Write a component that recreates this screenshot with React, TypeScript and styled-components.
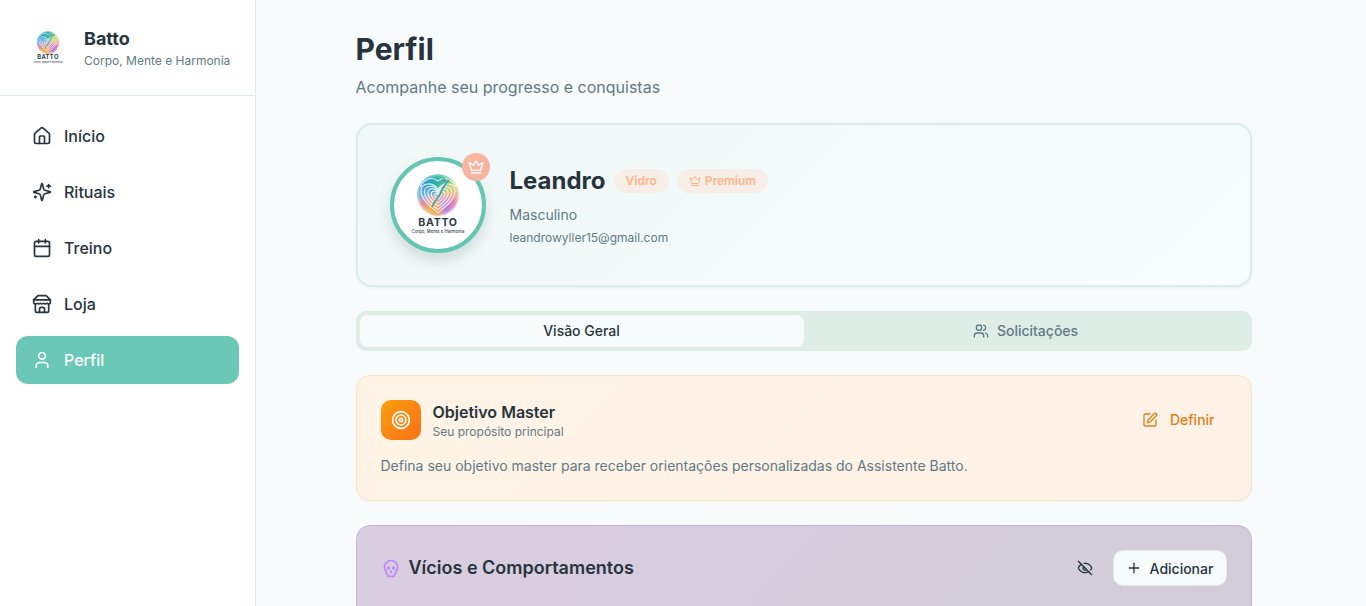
import React from "react";
import styled, { createGlobalStyle } from "styled-components";
import { Home, Calendar, User, Crown, Users, SquarePen, Skull, EyeOff, Plus } from "lucide-react";

const Global = createGlobalStyle`
  html, body { margin: 0; padding: 0; height: 100%; overflow: hidden; background: #f7fbfc; }
  body { font-family: Inter, "Liberation Sans", sans-serif; color: #27343d; }
  #root { height: 100%; }
  * { box-sizing: border-box; }
`;

const Shell = styled.div`
  display: flex;
  height: 606px;
  overflow: hidden;
`;
const Sidebar = styled.aside`
  width: 256px;
  flex: none;
  background: #fff;
  border-right: 1px solid #e1ebea;
`;
const Brand = styled.div`
  height: 96px;
  display: flex;
  align-items: center;
  gap: 12px;
  padding: 0 24px;
  border-bottom: 1px solid #e1ebea;
`;
const BrandName = styled.div`
  font-size: 18px;
  line-height: 28px;
  font-weight: 700;
  margin-top: -1px;
`;
const BrandSub = styled.div`
  font-size: 12px;
  line-height: 16px;
  color: #5f7a85;
`;
const Nav = styled.nav`
  display: flex;
  flex-direction: column;
  gap: 8px;
  padding: 16px;
`;
const NavItem = styled.div<{ $active?: boolean }>`
  height: 48px;
  display: flex;
  align-items: center;
  gap: 12px;
  padding: 0 16px;
  border-radius: 12px;
  font-size: 16px;
  font-weight: 500;
  background: ${(p) => (p.$active ? "#6cc8b6" : "transparent")};
  color: ${(p) => (p.$active ? "#f9fdfc" : "#27343d")};
`;
const Main = styled.main`
  flex: 1;
  padding: 31px 0 0 99.5px;
  min-width: 0;
`;
const Content = styled.div`
  width: 896px;
  display: flex;
  flex-direction: column;
`;
const Title = styled.h1`
  margin: 0;
  font-size: 30px;
  line-height: 36px;
  font-weight: 700;
`;
const Subtitle = styled.p`
  margin: 8px 0 0;
  font-size: 16px;
  line-height: 24px;
  color: #5f7a85;
`;
const ProfileCard = styled.section`
  margin-top: 24px;
  height: 164px;
  padding: 32px;
  display: flex;
  gap: 24px;
  border: 2px solid #d9ece8;
  border-radius: 16px;
  background: linear-gradient(135deg, #f0f9f8, #f7fcfc);
  box-shadow: 0 1px 3px rgba(60, 100, 100, 0.08);
`;
const AvatarWrap = styled.div`
  position: relative;
  width: 96px;
  height: 96px;
  flex: none;
`;
const Avatar = styled.div`
  width: 96px;
  height: 96px;
  border-radius: 50%;
  border: 4px solid #65c5b3;
  background: #fff;
  box-shadow: 0 8px 14px rgba(60, 90, 90, 0.18);
`;
const CrownBadge = styled.div`
  position: absolute;
  top: -4px;
  right: -4px;
  width: 28px;
  height: 28px;
  border-radius: 50%;
  display: flex;
  align-items: center;
  justify-content: center;
  background: linear-gradient(135deg, #f8b5a3, #f4b3a0);
  color: #fff;
`;
const Info = styled.div`
  display: flex;
  flex-direction: column;
  padding-top: 6px;
`;
const NameRow = styled.div`
  display: flex;
  align-items: center;
  gap: 8px;
  height: 36px;
`;
const Name = styled.span`
  font-size: 24px;
  line-height: 32px;
  font-weight: 700;
`;
const Pill = styled.span`
  display: inline-flex;
  align-items: center;
  gap: 4px;
  height: 24px;
  padding: 0 12px 1px;
  border-radius: 12px;
  font-size: 12px;
  font-weight: 600;
  color: #fbb486;
  background: #f8eee8;
`;
const Gender = styled.div`
  margin-top: 6px;
  font-size: 14px;
  line-height: 20px;
  color: #5f7a85;
`;
const Email = styled.div`
  margin-top: 5px;
  font-size: 12px;
  line-height: 16px;
  color: #5f7a85;
`;
const Tabs = styled.div`
  margin-top: 24px;
  height: 40px;
  padding: 4px;
  display: grid;
  grid-template-columns: 1fr 1fr;
  background: #deede6;
  border-radius: 10px;
`;
const Tab = styled.div<{ $active?: boolean }>`
  display: flex;
  align-items: center;
  justify-content: center;
  gap: 8px;
  padding-bottom: 1px;
  border-radius: 8px;
  font-size: 14px;
  font-weight: 500;
  background: ${(p) => (p.$active ? "#f7fbfc" : "transparent")};
  color: ${(p) => (p.$active ? "#27343d" : "#5f7a85")};
`;
const GoalCard = styled.section`
  margin-top: 24px;
  height: 126px;
  padding: 24px;
  border: 1px solid #fbe3bf;
  border-radius: 14px;
  background: linear-gradient(135deg, #fff4e6, #fef1e7);
  box-shadow: 0 1px 2px rgba(120, 90, 40, 0.06);
`;
const CardHead = styled.div`
  display: flex;
  align-items: center;
  justify-content: space-between;
`;
const Left = styled.div`
  display: flex;
  align-items: center;
  gap: 12px;
`;
const GoalIcon = styled.div`
  width: 40px;
  height: 40px;
  border-radius: 10px;
  display: flex;
  align-items: center;
  justify-content: center;
  color: #fff;
  background: linear-gradient(135deg, #f99f0d, #f97016);
`;
const GoalTitle = styled.div`
  font-size: 16px;
  line-height: 24px;
  font-weight: 600;
`;
const GoalSub = styled.div`
  font-size: 12px;
  line-height: 16px;
  color: #5f7a85;
`;
const DefineButton = styled.div`
  display: flex;
  align-items: center;
  gap: 12px;
  margin-right: 12px;
  padding-bottom: 1px;
  font-size: 14px;
  font-weight: 500;
  color: #dd7f16;
`;
const GoalText = styled.p`
  margin: 16px 0 0;
  font-size: 14px;
  line-height: 20px;
  color: #5f7a85;
`;
const HabitsCard = styled.section`
  margin-top: 24px;
  height: 200px;
  padding: 24px;
  border: 1px solid #c5b2dc;
  border-radius: 14px;
  background: linear-gradient(135deg, #d9cee1, #d1ccd8);
`;
const HabitsTitle = styled.div`
  display: flex;
  align-items: center;
  gap: 8px;
  font-size: 18px;
  line-height: 28px;
  font-weight: 600;
`;
const SkullMark = styled.span`
  display: flex;
  color: #c084fc;
`;
const Actions = styled.div`
  display: flex;
  align-items: center;
  gap: 20px;
`;
const AddButton = styled.div`
  width: 114px;
  height: 36px;
  display: flex;
  align-items: center;
  justify-content: center;
  gap: 8px;
  border-radius: 10px;
  font-size: 14px;
  font-weight: 500;
  background: #f7fbfc;
  border: 1px solid #e4eaec;
`;

type IconProps = { size?: number };
const Line: React.FC<IconProps & { children: React.ReactNode }> = ({ size = 20, children }) => (
  <svg width={size} height={size} viewBox="0 0 24 24" fill="none" stroke="currentColor" strokeWidth="2" strokeLinecap="round" strokeLinejoin="round">
    {children}
  </svg>
);
const SparkIcon: React.FC<IconProps> = ({ size }) => (
  <Line size={size}>
    <path d="M9.937 15.5A2 2 0 0 0 8.5 14.063l-6.135-1.582a.5.5 0 0 1 0-.962L8.5 9.936A2 2 0 0 0 9.937 8.5l1.582-6.135a.5.5 0 0 1 .963 0L14.063 8.5A2 2 0 0 0 15.5 9.937l6.135 1.581a.5.5 0 0 1 0 .964L15.5 14.063a2 2 0 0 0-1.437 1.437l-1.582 6.135a.5.5 0 0 1-.963 0z" />
    <path d="M20 3v4" />
    <path d="M22 5h-4" />
    <path d="M4 17v2" />
    <path d="M5 18H3" />
  </Line>
);
const StoreIcon: React.FC<IconProps> = ({ size }) => (
  <Line size={size}>
    <path d="m2 7 4.41-4.41A2 2 0 0 1 7.83 2h8.34a2 2 0 0 1 1.42.59L22 7" />
    <path d="M4 12v8a2 2 0 0 0 2 2h12a2 2 0 0 0 2-2v-8" />
    <path d="M15 22v-4a2 2 0 0 0-2-2h-2a2 2 0 0 0-2 2v4" />
    <path d="M2 7h20" />
    <path d="M22 7v3a2 2 0 0 1-2 2a2.7 2.7 0 0 1-1.59-.63.7.7 0 0 0-.82 0A2.7 2.7 0 0 1 16 12a2.7 2.7 0 0 1-1.59-.63.7.7 0 0 0-.82 0A2.7 2.7 0 0 1 12 12a2.7 2.7 0 0 1-1.59-.63.7.7 0 0 0-.82 0A2.7 2.7 0 0 1 8 12a2.7 2.7 0 0 1-1.59-.63.7.7 0 0 0-.82 0A2.7 2.7 0 0 1 4 12a2 2 0 0 1-2-2V7" />
  </Line>
);

const CX = 44;
const CY = 34;
const R = 21;
const WEDGES = ["#5cc690", "#c2d25a", "#eea884", "#de7cb8", "#b27ed8", "#ec9a4e", "#eeb054", "#e2889a", "#5cb0e2", "#2f92d0", "#25a4bc", "#35b4a0"];
const polar = (r: number, deg: number) => {
  const a = ((deg - 90) * Math.PI) / 180;
  return `${(CX + r * Math.cos(a)).toFixed(2)} ${(CY + r * Math.sin(a)).toFixed(2)}`;
};
const wedge = (i: number) => {
  const step = 360 / WEDGES.length;
  const from = i * step + 15;
  const to = from + step + 2;
  return `M${CX} ${CY}L${polar(R, from)}A${R} ${R} 0 0 1 ${polar(R, to)}Z`;
};
const heart = (s: number) => {
  const p = (x: number, y: number) => `${(CX + x * s).toFixed(2)} ${(CY + 1 + y * s).toFixed(2)}`;
  return `M${p(0, 17)}C${p(-8, 10)} ${p(-17, 4)} ${p(-17, -5)}C${p(-17, -13)} ${p(-6, -15)} ${p(0, -7)}C${p(6, -15)} ${p(17, -13)} ${p(17, -5)}C${p(17, 4)} ${p(8, 10)} ${p(0, 17)}Z`;
};

const Logo: React.FC<{ size: number; id: string }> = ({ size, id }) => (
  <svg width={size} height={size} viewBox="0 0 88 88" style={{ flex: "none", display: "block" }}>
    <defs>
      <clipPath id={`${id}c`}>
        <circle cx={CX} cy={CY} r={R} />
      </clipPath>
      <filter id={`${id}b`} x="-20%" y="-20%" width="140%" height="140%">
        <feGaussianBlur stdDeviation="2" />
      </filter>
    </defs>
    <g clipPath={`url(#${id}c)`}>
      <g filter={`url(#${id}b)`}>
        {WEDGES.map((c, i) => (
          <path key={c + i} d={wedge(i)} fill={c} />
        ))}
      </g>
      <path d={heart(1)} fill="#fff" opacity="0.12" />
      <g fill="none" stroke="#fff" strokeWidth="1.05" opacity="0.85">
        {[1, 0.8, 0.6, 0.4, 0.2].map((s) => (
          <path key={s} d={heart(s)} />
        ))}
        <path d="M26 26C30 18 38 15 44 20M62 26C58 18 50 15 44 20" />
      </g>
    </g>
    <circle cx="50" cy="19" r="1.8" fill="#3f9fb0" />
    <path d="M55 19C51 24 49 25 47 31C45 37 40 40 38 46" fill="none" stroke="#3f9fb0" strokeWidth="1.7" />
    <text x={CX} y="65" textAnchor="middle" fontFamily="Inter, sans-serif" fontWeight="700" fontSize="10.6" letterSpacing="0.7" fill="#2e3d47">
      BATTO
    </text>
    <text x={CX} y="72" textAnchor="middle" fontFamily="Inter, sans-serif" fontWeight="500" fontSize="4.3" fill="#3a4952">
      Corpo, Mente e Harmonia
    </text>
  </svg>
);

const nav = [
  { label: "Início", Icon: Home },
  { label: "Rituais", Icon: SparkIcon },
  { label: "Treino", Icon: Calendar },
  { label: "Loja", Icon: StoreIcon },
  { label: "Perfil", Icon: User, active: true },
];

export default function App() {
  return (
    <Shell>
      <Global />
      <Sidebar>
        <Brand>
          <Logo size={48} id="a" />
          <div>
            <BrandName>Batto</BrandName>
            <BrandSub>Corpo, Mente e Harmonia</BrandSub>
          </div>
        </Brand>
        <Nav>
          {nav.map(({ label, Icon, active }) => (
            <NavItem key={label} $active={active}>
              <Icon size={20} />
              {label}
            </NavItem>
          ))}
        </Nav>
      </Sidebar>
      <Main>
        <Content>
          <Title>Perfil</Title>
          <Subtitle>Acompanhe seu progresso e conquistas</Subtitle>
          <ProfileCard>
            <AvatarWrap>
              <Avatar>
                <Logo size={88} id="b" />
              </Avatar>
              <CrownBadge>
                <Crown size={16} />
              </CrownBadge>
            </AvatarWrap>
            <Info>
              <NameRow>
                <Name>Leandro</Name>
                <Pill>Vidro</Pill>
                <Pill>
                  <Crown size={12} />
                  Premium
                </Pill>
              </NameRow>
              <Gender>Masculino</Gender>
              <Email>leandrowyller15@gmail.com</Email>
            </Info>
          </ProfileCard>
          <Tabs>
            <Tab $active>Visão Geral</Tab>
            <Tab>
              <Users size={16} />
              Solicitações
            </Tab>
          </Tabs>
          <GoalCard>
            <CardHead>
              <Left>
                <GoalIcon>
                  <svg width="20" height="20" viewBox="0 0 24 24" fill="none" stroke="currentColor" strokeWidth="2">
                    <circle cx="12" cy="12" r="10" />
                    <circle cx="12" cy="12" r="6" />
                    <circle cx="12" cy="12" r="2" />
                  </svg>
                </GoalIcon>
                <div>
                  <GoalTitle>Objetivo Master</GoalTitle>
                  <GoalSub>Seu propósito principal</GoalSub>
                </div>
              </Left>
              <DefineButton>
                <SquarePen size={16} />
                Definir
              </DefineButton>
            </CardHead>
            <GoalText>Defina seu objetivo master para receber orientações personalizadas do Assistente Batto.</GoalText>
          </GoalCard>
          <HabitsCard>
            <CardHead>
              <HabitsTitle>
                <SkullMark>
                  <Skull size={20} />
                </SkullMark>
                Vícios e Comportamentos
              </HabitsTitle>
              <Actions>
                <EyeOff size={16} />
                <AddButton>
                  <Plus size={16} />
                  Adicionar
                </AddButton>
              </Actions>
            </CardHead>
          </HabitsCard>
        </Content>
      </Main>
    </Shell>
  );
}
